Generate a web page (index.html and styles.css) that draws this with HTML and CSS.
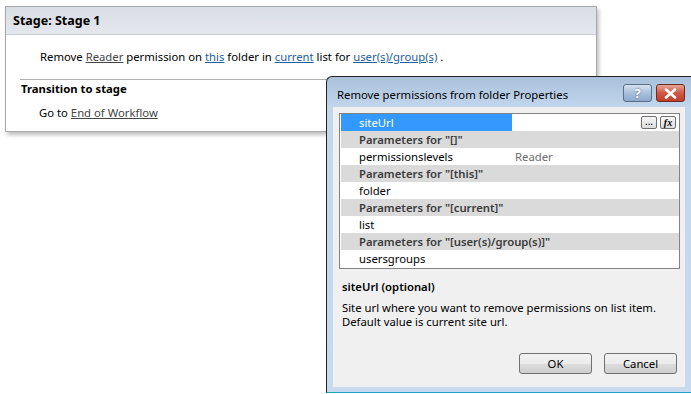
FILE: index.html
```html
<!DOCTYPE html>
<html lang="en">
  <head>
    <meta charset="UTF-8" />
    <title>Stage 1</title>
    <link rel="stylesheet" href="styles.css">
  </head>
  <body>
    <div class="stage">
      <div class="stage-head">Stage: Stage 1</div>
      <div class="stage-body">
        <p class="action">
          Remove <a class="dark" href="javascript:">Reader</a> permission on
          <a href="javascript:">this</a> folder in <a href="javascript:">current</a>
          list for <a href="javascript:">user(s)/group(s)</a> .
        </p>
        <div class="transition">
          <h2>Transition to stage</h2>
          <p class="goto">Go to <a class="dark" href="javascript:">End of Workflow</a></p>
        </div>
      </div>
    </div>

    <div class="dialog">
      <div class="titlebar">
        <span class="title">Remove permissions from folder Properties</span>
        <span class="tbtn help">?</span>
        <span class="tbtn close">
          <svg width="13" height="11" viewBox="0 0 13 11">
            <path d="M2 1.5 L11 9.5 M11 1.5 L2 9.5" stroke="#fff" stroke-width="2.6" stroke-linecap="round" />
          </svg>
        </span>
      </div>
      <div class="client">
        <div class="grid">
          <div class="row sel">
            <span class="name">siteUrl</span>
            <span class="value">
              <span class="mini">...</span>
              <span class="mini fx"><i>fx</i></span>
            </span>
          </div>
          <div class="row cat">Parameters for "[]"</div>
          <div class="row">
            <span class="name">permissionslevels</span>
            <span class="value gray">Reader</span>
          </div>
          <div class="row cat">Parameters for "[this]"</div>
          <div class="row">
            <span class="name">folder</span>
            <span class="value"></span>
          </div>
          <div class="row cat">Parameters for "[current]"</div>
          <div class="row">
            <span class="name">list</span>
            <span class="value"></span>
          </div>
          <div class="row cat">Parameters for "[user(s)/group(s)]"</div>
          <div class="row">
            <span class="name">usersgroups</span>
            <span class="value"></span>
          </div>
        </div>
        <div class="help-text">
          <h3>siteUrl (optional)</h3>
          <p>Site url where you want to remove permissions on list item.<br />Default value is current site url.</p>
        </div>
        <div class="buttons">
          <button>OK</button>
          <button>Cancel</button>
        </div>
      </div>
    </div>
  </body>
</html>
```

FILE: styles.css
```css
* {
  margin: 0;
  padding: 0;
  box-sizing: border-box;
}
body {
  width: 691px;
  height: 394px;
  overflow: hidden;
  background: #fff;
  font-family: "Noto Sans", "Open Sans", sans-serif;
  font-size: 11.3px;
  color: #000;
  padding: 6px 0 0 5px;
  position: relative;
}
a {
  color: #1e5e9e;
}
a.dark {
  color: #444;
}
.stage {
  width: 592px;
  border: 1px solid #a8a8a8;
  box-shadow: 2px 3px 4px rgba(0, 0, 0, 0.25);
}
.stage-head {
  height: 28px;
  padding: 5px 0 0 7px;
  font-weight: bold;
  font-size: 12.5px;
  background: linear-gradient(#d9dde5, #e4e7ec);
  border-bottom: 1px solid #c9ccd2;
}
.stage-body {
  padding: 14px 0 11px 14px;
}
.action {
  padding-left: 20px;
  height: 30px;
}
.transition {
  border-top: 1px solid #b0b0b0;
  padding: 1px 0 0 1px;
}
.transition h2 {
  font-size: 11.3px;
  font-weight: bold;
}
.goto {
  padding: 9px 0 0 18px;
}

.dialog {
  position: absolute;
  left: 326px;
  top: 76px;
  width: 368px;
  height: 317px;
  border: 1px solid #222;
  border-right: 0;
  border-bottom-color: #1aa6c8;
  border-radius: 6px 0 0 0;
  background: linear-gradient(#a9c1dc, #c2d6ec 30px, #c7daee);
  padding: 0 9px 6px 6px;
}
.titlebar {
  height: 30px;
  display: flex;
  align-items: center;
  padding-left: 4px;
}
.title {
  flex: 1;
  padding-top: 4px;
}
.tbtn {
  width: 29px;
  height: 18px;
  border: 1px solid #5a6e86;
  border-radius: 3px;
  display: flex;
  align-items: center;
  justify-content: center;
  margin-left: 4px;
  margin-top: 2px;
  color: #fff;
  font-weight: bold;
  font-size: 13px;
}
.help {
  background: linear-gradient(#d6e2f0, #a9c0dc 50%, #8fa9cb);
  text-shadow: 0 0 2px #4a6080;
}
.close {
  border-color: #6b2a22;
  background: linear-gradient(#e8a595, #cf5a44 50%, #c0402a);
}
.client {
  background: #f0f0f0;
  height: 280px;
  padding: 6px 5px 0 6px;
}
.grid {
  border: 1px solid #838383;
  background: #fff;
  padding: 0 0 1px 1px;
}
.row {
  height: 17px;
  display: flex;
  align-items: center;
  line-height: 17px;
}
.name {
  width: 171px;
  padding-left: 18px;
}
.value {
  flex: 1;
  height: 17px;
  padding-left: 3px;
  display: flex;
  align-items: center;
  justify-content: flex-end;
  gap: 3px;
  padding-right: 3px;
}
.value.gray {
  justify-content: flex-start;
  color: #6d6d6d;
}
.sel .name {
  background: #3399ff;
  color: #fff;
}
.cat {
  background: #dadada;
  color: #3a3a3a;
  font-weight: 600;
  padding-left: 18px;
}
.mini {
  width: 16px;
  height: 13px;
  border: 1px solid #707070;
  border-radius: 2px;
  background: linear-gradient(#f6f6f6, #dcdcdc);
  font-size: 10px;
  line-height: 9px;
  text-align: center;
}
.fx {
  font-family: "Liberation Serif", serif;
  font-weight: bold;
  font-size: 10px;
  line-height: 11px;
}
.help-text {
  padding: 10px 0 0 3px;
}
.help-text h3 {
  font-size: 11.3px;
  font-weight: 600;
}
.help-text p {
  margin-top: 7px;
  line-height: 14px;
}
.buttons {
  display: flex;
  justify-content: flex-end;
  gap: 12px;
  padding: 24px 3px 0 0;
}
.buttons button {
  width: 73px;
  height: 21px;
  border: 1px solid #707070;
  border-radius: 3px;
  background: linear-gradient(#f2f2f2, #ebebeb 50%, #dddddd 51%, #cfcfcf);
  font-family: "Noto Sans", sans-serif;
  font-size: 11.3px;
}
```
